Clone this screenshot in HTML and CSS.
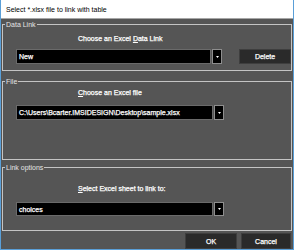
FILE: index.html
```html
<!DOCTYPE html>
<html lang="en">
<head>
    <meta charset="UTF-8">
    <title>Select *.xlsx file to link with table</title>
    <link rel="stylesheet" href="styles.css">
</head>
<body>
    <div class="window">
        <div class="titlebar">Select *.xlsx file to link with table</div>

        <div class="content">
            <fieldset class="group group-data">
                <legend>Data Link</legend>
                <div class="caption">Choose an Excel <u>D</u>ata Link</div>
                <div class="row">
                    <div class="combo combo-short">
                        <span class="combo-text">New</span>
                    </div>
                    <div class="drop">
                        <svg width="3" height="2" viewBox="0 0 3 2"><polygon points="0,0 3,0 1.5,2" fill="#fff"/></svg>
                    </div>
                    <button class="btn btn-delete">Delete</button>
                </div>
            </fieldset>

            <fieldset class="group group-file">
                <legend>File</legend>
                <div class="caption"><u>C</u>hoose an Excel file</div>
                <div class="row">
                    <div class="combo">
                        <span class="combo-text">C:\Users\Bcarter.IMSIDESIGN\Desktop\sample.xlsx</span>
                    </div>
                    <div class="drop">
                        <svg width="3" height="2" viewBox="0 0 3 2"><polygon points="0,0 3,0 1.5,2" fill="#fff"/></svg>
                    </div>
                </div>
            </fieldset>

            <fieldset class="group group-sheet">
                <legend>Link options</legend>
                <div class="caption"><u>S</u>elect Excel sheet to link to:</div>
                <div class="row">
                    <div class="combo">
                        <span class="combo-text">choices</span>
                    </div>
                    <div class="drop">
                        <svg width="3" height="2" viewBox="0 0 3 2"><polygon points="0,0 3,0 1.5,2" fill="#fff"/></svg>
                    </div>
                </div>
            </fieldset>

            <div class="footer">
                <button class="btn btn-ok">OK</button>
                <button class="btn btn-cancel">Cancel</button>
            </div>
        </div>
    </div>
</body>
</html>
```

FILE: styles.css
```css
body {
    margin: 0;
    font-family: 'Liberation Sans', Arial, sans-serif;
    font-size: 7px;
}

.window {
    width: 294px;
    height: 250px;
    box-sizing: border-box;
    border: 1px solid #5a9fd8;
    border-top: none;
    background: #555555;
    display: flex;
    flex-direction: column;
    overflow: hidden;
}

.titlebar {
    height: 18px;
    line-height: 19px;
    padding-left: 5px;
    background: #ffffff;
    color: #000000;
    border-bottom: 1px solid #a6a6a6;
}

.content {
    padding: 0 1px;
    display: flex;
    flex-direction: column;
}

/* Group boxes */
.group {
    margin: 0;
    padding: 0;
    min-width: 0;
    border: 1px solid #c4c4c4;
}

.group legend {
    margin-left: 2px;
    padding: 0 1px;
    line-height: 9px;
    color: #e4e4e4;
}

.caption {
    margin-left: 75px;
    line-height: 9px;
    color: #ffffff;
    -webkit-text-stroke: 0.25px #ffffff;
}

.row {
    display: flex;
    margin-left: 13px;
}

.group-data {
    margin-top: 1px;
    padding-bottom: 6px;
}

.group-data .caption {
    margin-top: 5px;
}

.group-data .row {
    margin-top: 6px;
}

.group-file {
    margin-top: 6px;
    padding-bottom: 39px;
}

.group-file .caption {
    margin-top: 2px;
}

.group-file .row {
    margin-top: 8px;
}

.group-sheet {
    margin-top: 3px;
    padding-bottom: 14px;
}

.group-sheet .caption {
    margin-top: 12px;
}

.group-sheet .row {
    margin-top: 9px;
}

.group-sheet .combo,
.group-sheet .drop {
    height: 14px;
}

/* Combo boxes */
.combo {
    width: 197px;
    height: 15px;
    box-sizing: border-box;
    background: #000000;
    border: 1px solid #6a6a6a;
    display: flex;
    align-items: center;
    padding-left: 2px;
}

.combo-short {
    width: 195px;
}

.combo-text {
    color: #ffffff;
    -webkit-text-stroke: 0.25px #ffffff;
    white-space: nowrap;
}

.drop {
    width: 10px;
    height: 15px;
    box-sizing: border-box;
    margin-left: 1px;
    background: #000000;
    border: 1px solid #8e8e8e;
    display: flex;
    align-items: center;
    justify-content: center;
}

.drop svg {
    display: block;
}

/* Buttons */
.btn {
    height: 15px;
    padding: 0;
    box-sizing: border-box;
    background: #2a2a2a;
    border: 1px solid #3e3e3e;
    color: #ffffff;
    font-family: inherit;
    font-size: 7px;
    -webkit-text-stroke: 0.25px #ffffff;
}

.btn-delete {
    width: 52px;
    margin-left: 17px;
}

.footer {
    display: flex;
    justify-content: flex-end;
    gap: 4px;
    margin-top: 2px;
    padding-right: 1px;
}

.footer .btn {
    height: 16px;
}

.btn-ok {
    width: 52px;
}

.btn-cancel {
    width: 50px;
}
```
